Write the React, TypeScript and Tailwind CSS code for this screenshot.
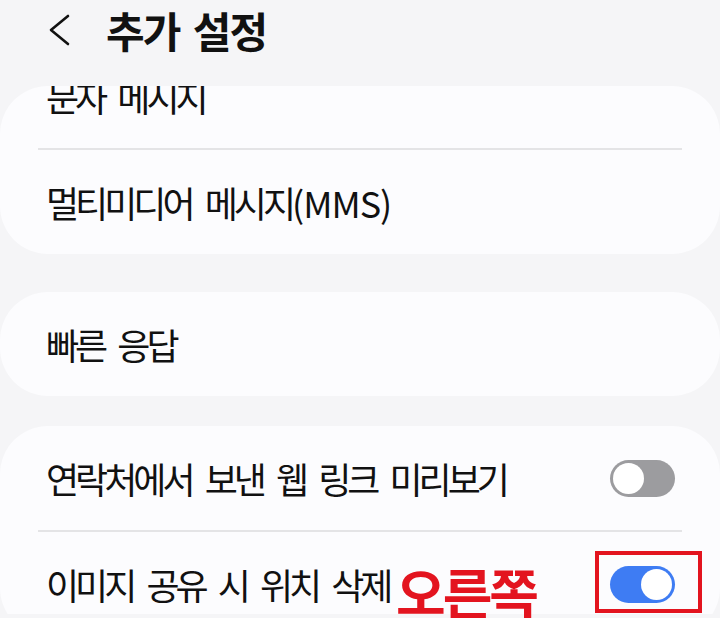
import React from "react";

const font = { fontFamily: '"Noto Sans CJK KR", "Noto Sans", sans-serif' };

function Toggle({ on }: { on: boolean }) {
  return on ? (
    <div className="w-[65px] h-[37px] rounded-full bg-[#3e7cf3] flex items-center justify-end pr-[3px]">
      <div className="w-[31px] h-[31px] rounded-full bg-white" />
    </div>
  ) : (
    <div className="w-[65px] h-[37px] rounded-full bg-[#9c9c9f] flex items-center justify-start pl-[3px]">
      <div className="w-[31px] h-[31px] rounded-full bg-white" />
    </div>
  );
}

function Row({ label, latin, right }: { label: string; latin?: string; right?: React.ReactNode }) {
  return (
    <div className="h-[104px] flex items-center justify-between pl-[46px] pr-[45px]">
      <span className="text-[36px] leading-none tracking-[-4px] [word-spacing:9px] text-[#111]">
        {label}
        {latin && <span className="tracking-[-1px]">{latin}</span>}
      </span>
      {right}
    </div>
  );
}

function Divider() {
  return <div className="mx-[38px] h-[2px] bg-[#e4e4e6]" />;
}

export default function App() {
  return (
    <div className="w-[720px] h-[618px] overflow-hidden bg-[#f5f5f7] flex flex-col relative" style={font}>
      <div className="h-[86px] shrink-0 flex items-center pl-[48px] pb-[27px]">
        <svg width="24" height="32" viewBox="0 0 24 32" className="mr-[34px]">
          <polyline points="20,2 3,16 20,30" fill="none" stroke="#111" strokeWidth="2.6" strokeLinecap="round" strokeLinejoin="round" />
        </svg>
        <span className="text-[42px] font-bold leading-none tracking-[-2px] [word-spacing:6px] text-[#111]">추가 설정</span>
      </div>
      <div className="h-[528px] shrink-0 overflow-hidden rounded-t-[48px]">
        <div className="-mt-[42px] flex flex-col">
          <div className="bg-[#fcfcfe] rounded-[48px]">
            <Row label="문자 메시지" />
            <Divider />
            <Row label="멀티미디어 메시지" latin="(MMS)" />
          </div>
          <div className="h-[38px]" />
          <div className="bg-[#fcfcfe] rounded-[48px]">
            <Row label="빠른 응답" />
          </div>
          <div className="h-[30px]" />
          <div className="bg-[#fcfcfe] rounded-[48px]">
            <Row label="연락처에서 보낸 웹 링크 미리보기" right={<Toggle on={false} />} />
            <Divider />
            <Row label="이미지 공유 시 위치 삭제" right={<Toggle on={true} />} />
          </div>
        </div>
      </div>
      <div className="absolute left-[396px] top-[565px] text-[54px] font-bold leading-none tracking-[-3px] text-[#e3141f]">오른쪽</div>
      <div className="absolute left-[595px] top-[551px] w-[107px] h-[62px] border-[4px] border-[#e3141f]" />
    </div>
  );
}
